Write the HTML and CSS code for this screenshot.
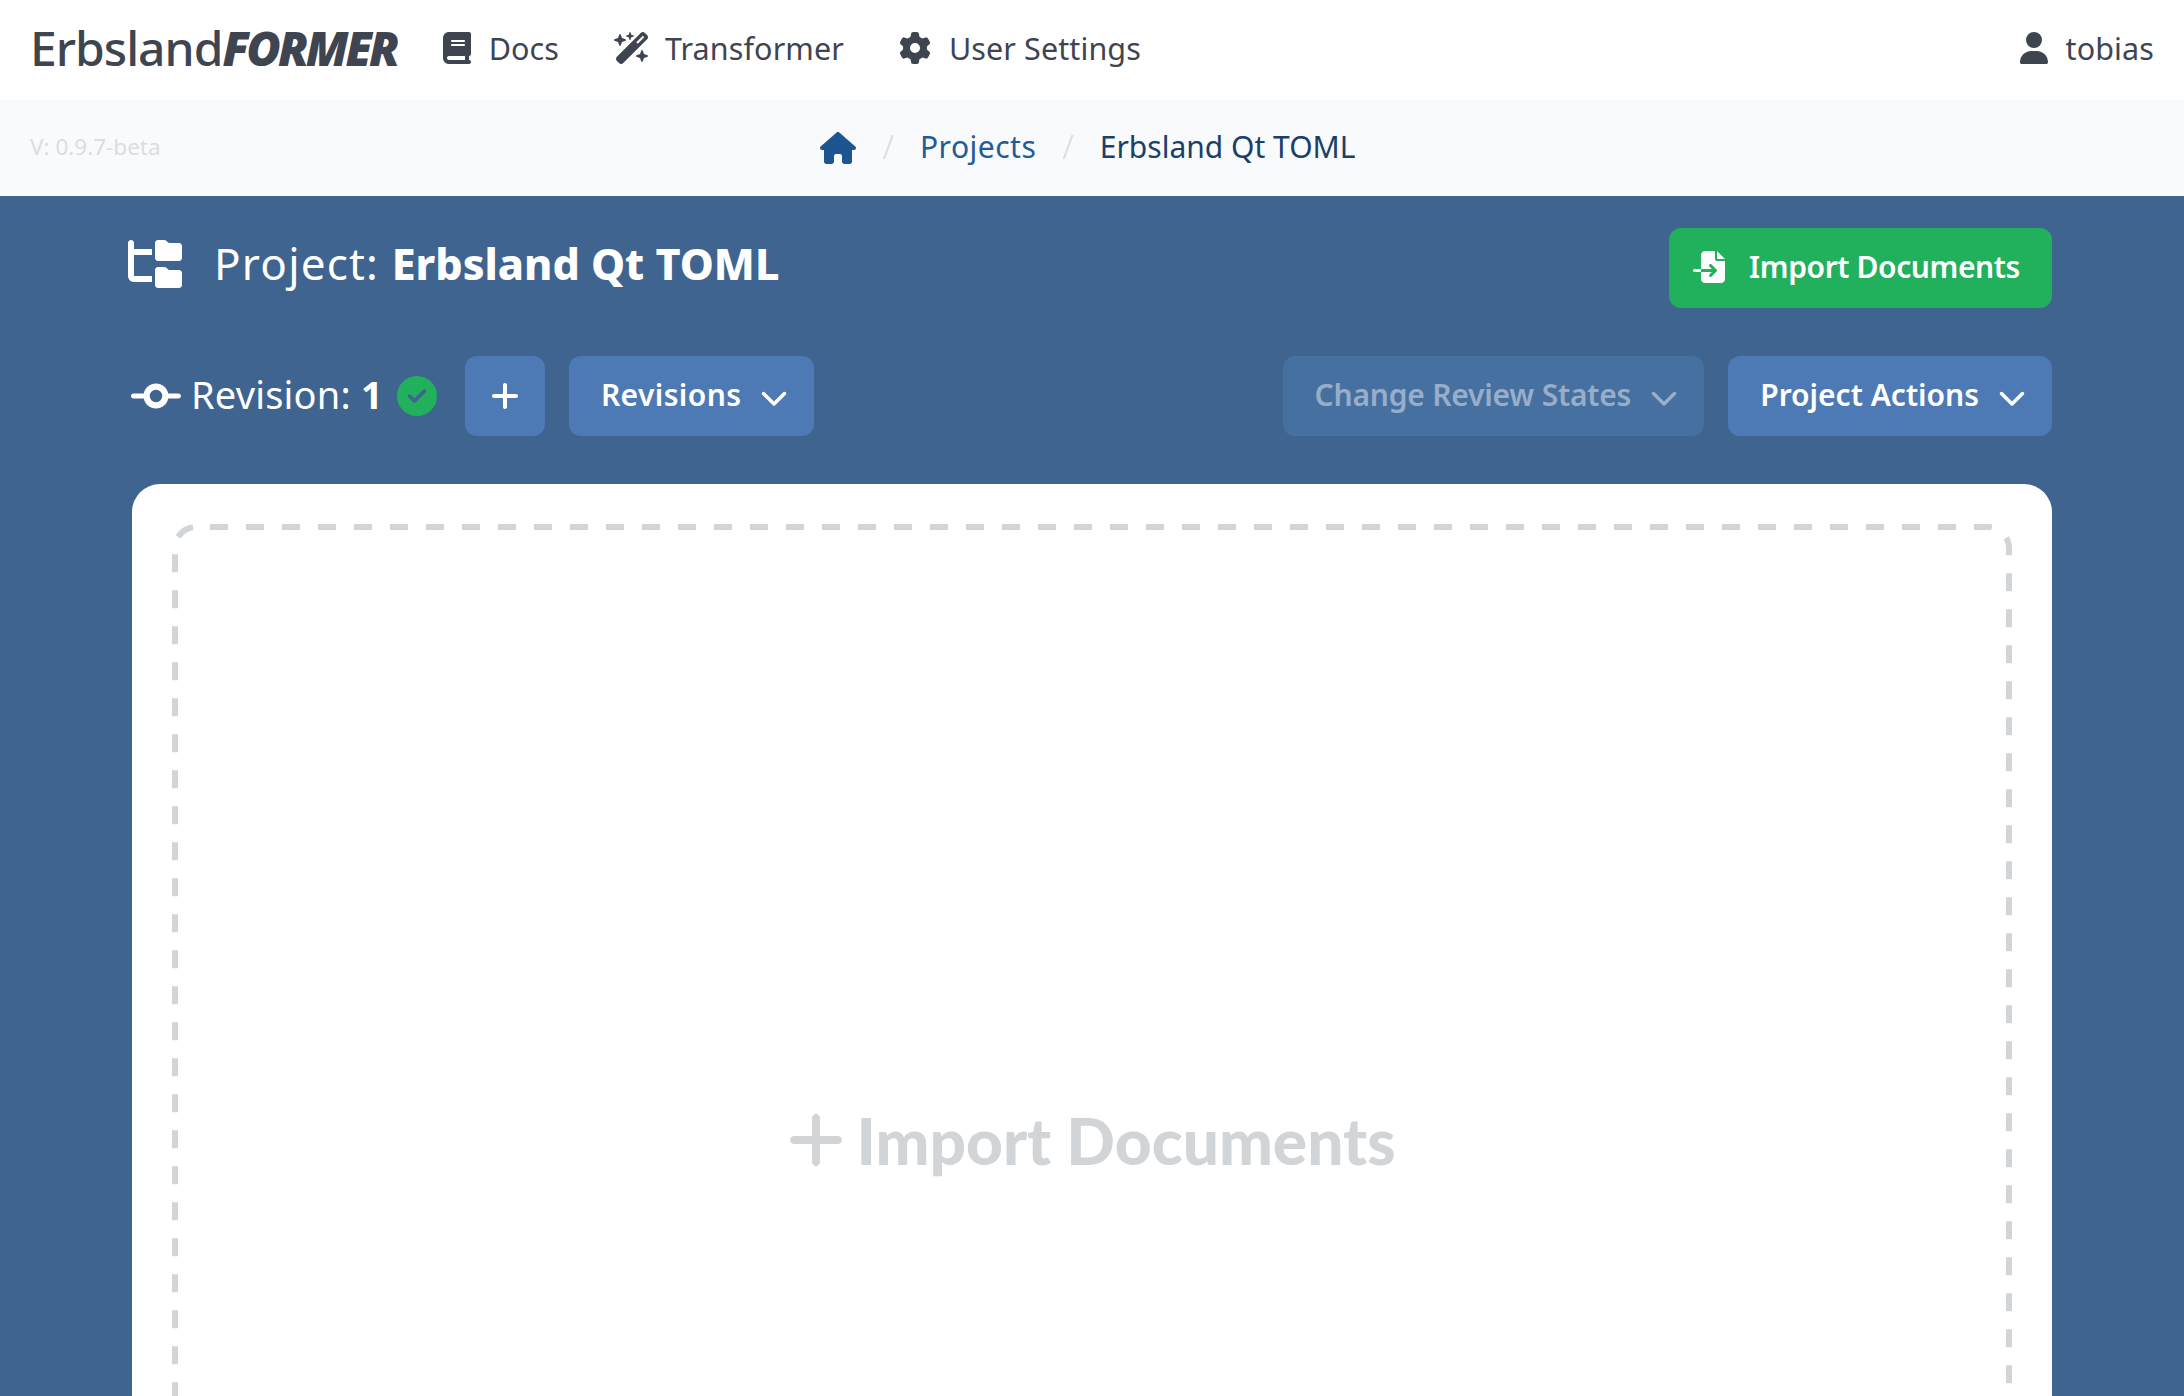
FILE: index.html
```html
<!DOCTYPE html>
<html lang="en">
<head>
<meta charset="utf-8">
<title>ErbslandFORMER</title>
<link rel="stylesheet" href="styles.css">
</head>
<body>
<nav class="nav">
  <div class="logo">Erbsland<b>FORMER</b></div>
  <a class="nav-item nav-docs"><svg class="nav-icon" viewBox="0 0 448 512"><path d="M96 0C43 0 0 43 0 96V416c0 53 43 96 96 96H384h32c17.7 0 32-14.3 32-32s-14.3-32-32-32V384c17.7 0 32-14.3 32-32V32c0-17.7-14.3-32-32-32H384 96zm0 384H352v64H96c-17.7 0-32-14.3-32-32s14.3-32 32-32zm32-240c0-8.8 7.2-16 16-16H336c8.8 0 16 7.2 16 16s-7.2 16-16 16H144c-8.8 0-16-7.2-16-16zm16 48H336c8.8 0 16 7.2 16 16s-7.2 16-16 16H144c-8.8 0-16-7.2-16-16s7.2-16 16-16z"/></svg>Docs</a>
  <a class="nav-item nav-wand"><svg class="nav-icon" viewBox="0 0 576 512"><path d="M234.7 42.7L197 56.8c-3 1.1-5 4-5 7.2s2 6.1 5 7.2l37.7 14.1L248.8 123c1.1 3 4 5 7.2 5s6.1-2 7.2-5l14.1-37.7L315 71.2c3-1.1 5-4 5-7.2s-2-6.1-5-7.2L277.3 42.7 263.2 5c-1.1-3-4-5-7.2-5s-6.1 2-7.2 5L234.7 42.7zM46.1 395.4c-18.7 18.7-18.7 49.1 0 67.9l34.6 34.6c18.7 18.7 49.1 18.7 67.9 0L529.9 116.5c18.7-18.7 18.7-49.1 0-67.9L495.3 14.1c-18.7-18.7-49.1-18.7-67.9 0L46.1 395.4zM484.6 82.6l-105 105-23.3-23.3 105-105 23.3 23.3zM7.5 117.2C3 118.9 0 123.2 0 128s3 9.1 7.5 10.8L64 160l21.2 56.5c1.7 4.5 6 7.5 10.8 7.5s9.1-3 10.8-7.5L128 160l56.5-21.2c4.5-1.7 7.5-6 7.5-10.8s-3-9.1-7.5-10.8L128 96 106.8 39.5C105.1 35 100.8 32 96 32s-9.1 3-10.8 7.5L64 96 7.5 117.2zm352 256c-4.5 1.7-7.5 6-7.5 10.8s3 9.1 7.5 10.8L416 416l21.2 56.5c1.7 4.5 6 7.5 10.8 7.5s9.1-3 10.8-7.5L480 416l56.5-21.2c4.5-1.7 7.5-6 7.5-10.8s-3-9.1-7.5-10.8L480 352l-21.2-56.5c-1.7-4.5-6-7.5-10.8-7.5s-9.1 3-10.8 7.5L416 352l-56.5 21.2z"/></svg>Transformer</a>
  <a class="nav-item"><svg class="nav-icon" viewBox="0 0 512 512"><path d="M495.9 166.6c3.2 8.7 .5 18.4-6.4 24.6l-43.3 39.4c1.1 8.3 1.7 16.8 1.7 25.4s-.6 17.1-1.7 25.4l43.3 39.4c6.9 6.2 9.6 15.9 6.4 24.6c-4.4 11.9-9.7 23.3-15.8 34.3l-4.7 8.1c-6.6 11-14 21.4-22.1 31.2c-5.9 7.2-15.7 9.6-24.5 6.8l-55.7-17.7c-13.4 10.3-28.2 18.9-44 25.4l-12.5 57.1c-2 9.1-9 16.3-18.2 17.8c-13.8 2.3-28 3.5-42.5 3.5s-28.7-1.2-42.5-3.5c-9.2-1.5-16.2-8.7-18.2-17.8l-12.5-57.1c-15.8-6.5-30.6-15.1-44-25.4L83.1 425.9c-8.8 2.8-18.6 .3-24.5-6.8c-8.1-9.8-15.5-20.2-22.1-31.2l-4.7-8.1c-6.1-11-11.4-22.4-15.8-34.3c-3.2-8.7-.5-18.4 6.4-24.6l43.3-39.4C64.6 273.1 64 264.6 64 256s.6-17.1 1.7-25.4L22.4 191.2c-6.9-6.2-9.6-15.9-6.4-24.6c4.4-11.9 9.7-23.3 15.8-34.3l4.7-8.1c6.6-11 14-21.4 22.1-31.2c5.9-7.2 15.7-9.6 24.5-6.8l55.7 17.7c13.4-10.3 28.2-18.9 44-25.4l12.5-57.1c2-9.1 9-16.3 18.2-17.8C227.3 1.2 241.5 0 256 0s28.7 1.2 42.5 3.5c9.2 1.5 16.2 8.7 18.2 17.8l12.5 57.1c15.8 6.5 30.6 15.1 44 25.4l55.7-17.7c8.8-2.8 18.6-.3 24.5 6.8c8.1 9.8 15.5 20.2 22.1 31.2l4.7 8.1c6.1 11 11.4 22.4 15.8 34.3zM256 336a80 80 0 1 0 0-160 80 80 0 1 0 0 160z"/></svg>User Settings</a>
  <a class="nav-item nav-user"><svg class="nav-icon" viewBox="0 0 448 512"><path d="M224 256A128 128 0 1 0 224 0a128 128 0 1 0 0 256zm-45.7 48C79.8 304 0 383.8 0 482.3C0 498.7 13.3 512 29.7 512H418.3c16.4 0 29.7-13.3 29.7-29.7C448 383.8 368.2 304 269.7 304H178.3z"/></svg>tobias</a>
</nav>
<div class="crumbs">
  <span class="version">V: 0.9.7-beta</span>
  <div class="trail">
    <svg class="home" viewBox="0 0 576 512"><path d="M575.8 255.5c0 18-15 32.1-32 32.1h-32l.7 160.2c0 2.7-.2 5.4-.5 8.1V472c0 22.1-17.9 40-40 40H456c-1.1 0-2.2 0-3.3-.1c-1.4 .1-2.8 .1-4.2 .1H416 392c-22.1 0-40-17.9-40-40V448 384c0-17.7-14.3-32-32-32H256c-17.7 0-32 14.3-32 32v64 24c0 22.1-17.9 40-40 40H160 128.1c-1.5 0-3-.1-4.5-.2c-1.2 .1-2.4 .2-3.6 .2H104c-22.1 0-40-17.9-40-40V360c0-.9 0-1.9 .1-2.8V287.6H32c-18 0-32-14-32-32.1c0-9 3-17 10-24L266.4 8c7-7 15-8 22-8s15 2 21 7L564.8 231.5c8 7 12 15 11 24z"/></svg>
    <span class="sep">/</span>
    <span class="crumb-link">Projects</span>
    <span class="sep">/</span>
    <span class="crumb-current">Erbsland Qt TOML</span>
  </div>
</div>
<main class="main">
  <header class="title-row">
    <h1 class="title"><svg class="title-icon" viewBox="0 0 576 512"><path d="M64 32C64 14.3 49.7 0 32 0S0 14.3 0 32v96V384c0 35.3 28.7 64 64 64H256V384H64V160H256V96H64V32zM288 192c0 17.7 14.3 32 32 32H544c17.7 0 32-14.3 32-32V64c0-17.7-14.3-32-32-32H445.3c-8.5 0-16.6-3.4-22.6-9.4L409.4 9.4c-6-6-14.1-9.4-22.6-9.4H320c-17.7 0-32 14.3-32 32V192zm0 288c0 17.7 14.3 32 32 32H544c17.7 0 32-14.3 32-32V352c0-17.7-14.3-32-32-32H445.3c-8.5 0-16.6-3.4-22.6-9.4l-13.3-13.3c-6-6-14.1-9.4-22.6-9.4H320c-17.7 0-32 14.3-32 32V480z"/></svg><span class="title-text">Project:&nbsp;<b>Erbsland Qt TOML</b></span></h1>
    <button class="btn btn-green"><svg class="btn-lead" viewBox="0 0 512 512"><path d="M128 64c0-35.3 28.7-64 64-64H352V128c0 17.7 14.3 32 32 32H512V448c0 35.3-28.7 64-64 64H192c-35.3 0-64-28.7-64-64V336H302.1l-39 39c-9.4 9.4-9.4 24.6 0 33.9s24.6 9.4 33.9 0l80-80c9.4-9.4 9.4-24.6 0-33.9l-80-80c-9.4-9.4-24.6-9.4-33.9 0s-9.4 24.6 0 33.9l39 39H128V64zm0 224v48H24c-13.3 0-24-10.7-24-24s10.7-24 24-24H128zM512 128H384V0L512 128z"/></svg>Import Documents</button>
  </header>
  <div class="rev-row">
    <svg class="rev-icon" viewBox="0 0 640 512"><path d="M320 336a80 80 0 1 0 0-160 80 80 0 1 0 0 160zm156.8-48C462 361 397.4 416 320 416s-142-55-156.8-128H32c-17.7 0-32-14.3-32-32s14.3-32 32-32H163.2C178 151 242.6 96 320 96s142 55 156.8 128H608c17.7 0 32 14.3 32 32s-14.3 32-32 32H476.8z"/></svg>
    <span class="rev-label">Revision: <b>1</b></span>
    <svg class="rev-check" viewBox="0 0 512 512"><path d="M256 512A256 256 0 1 0 256 0a256 256 0 1 0 0 512zM369 209L241 337c-9.4 9.4-24.6 9.4-33.9 0l-64-64c-9.4-9.4-9.4-24.6 0-33.9s24.6-9.4 33.9 0l47 47L335 175c9.4-9.4 24.6-9.4 33.9 0s9.4 24.6 0 33.9z"/></svg>
    <button class="btn btn-blue btn-plus"><svg class="plus-icon" viewBox="0 0 448 512"><path d="M256 80c0-17.7-14.3-32-32-32s-32 14.3-32 32V224H48c-17.7 0-32 14.3-32 32s14.3 32 32 32H192V432c0 17.7 14.3 32 32 32s32-14.3 32-32V288H400c17.7 0 32-14.3 32-32s-14.3-32-32-32H256V80z"/></svg></button>
    <button class="btn btn-blue btn-revisions">Revisions<svg class="chev" viewBox="0 0 512 512"><path d="M233.4 406.6c12.5 12.5 32.8 12.5 45.3 0l192-192c12.5-12.5 12.5-32.8 0-45.3s-32.8-12.5-45.3 0L256 338.7 86.6 169.4c-12.5-12.5-32.8-12.5-45.3 0s-12.5 32.8 0 45.3l192 192z"/></svg></button>
    <div class="spacer"></div>
    <button class="btn btn-blue btn-disabled">Change Review States<svg class="chev" viewBox="0 0 512 512"><path d="M233.4 406.6c12.5 12.5 32.8 12.5 45.3 0l192-192c12.5-12.5 12.5-32.8 0-45.3s-32.8-12.5-45.3 0L256 338.7 86.6 169.4c-12.5-12.5-32.8-12.5-45.3 0s-12.5 32.8 0 45.3l192 192z"/></svg></button>
    <button class="btn btn-blue">Project Actions<svg class="chev" viewBox="0 0 512 512"><path d="M233.4 406.6c12.5 12.5 32.8 12.5 45.3 0l192-192c12.5-12.5 12.5-32.8 0-45.3s-32.8-12.5-45.3 0L256 338.7 86.6 169.4c-12.5-12.5-32.8-12.5-45.3 0s-12.5 32.8 0 45.3l192 192z"/></svg></button>
  </div>
  <section class="card">
    <div class="drop">
      <svg class="drop-border" aria-hidden="true"><rect class="drop-rect" x="3" y="3" rx="21" ry="21"/></svg>
      <svg class="drop-plus" viewBox="0 0 448 512"><path d="M256 80c0-17.7-14.3-32-32-32s-32 14.3-32 32V224H48c-17.7 0-32 14.3-32 32s14.3 32 32 32H192V432c0 17.7 14.3 32 32 32s32-14.3 32-32V288H400c17.7 0 32-14.3 32-32s-14.3-32-32-32H256V80z"/></svg>
      <span class="drop-text">Import Documents</span>
    </div>
  </section>
</main>
</body>
</html>
```
FILE: styles.css
```css
* { box-sizing: border-box; }
html { margin: 0; height: 100%; overflow: hidden; }
body {
  margin: 0;
  height: 1396px;
  overflow: hidden;
  background: #3f6490;
  font-family: "Noto Sans", "Open Sans", sans-serif;
  color: #3f4451;
}
b { font-weight: 700; }

.nav {
  display: flex;
  align-items: center;
  height: 100px;
  padding: 0 30px 5px 30px;
  background: #fff;
  font-size: 30.5px;
  letter-spacing: 0.1px;
}
.logo {
  font-size: 48px;
  font-weight: 500;
  letter-spacing: -1px;
  margin-right: 46px;
  white-space: nowrap;
}
.logo b { font-size: 47px; font-style: italic; font-weight: 900; letter-spacing: -2.9px; }
.nav-item {
  display: flex;
  align-items: center;
  gap: 18px;
  margin-right: 55px;
  white-space: nowrap;
}
.nav-wand { gap: 15px; }
.nav-icon { height: 32px; width: auto; fill: #3f4451; display: block; }
.nav-user { margin-left: auto; margin-right: 0; }

.crumbs {
  position: relative;
  display: flex;
  align-items: center;
  justify-content: center;
  height: 96px;
  padding-bottom: 3px;
  background: #f9fafb;
  font-size: 30px;
}
.version {
  position: absolute;
  left: 30px;
  top: 48%;
  transform: translateY(-50%);
  font-size: 22.5px;
  color: #dadde1;
}
.trail { display: flex; align-items: center; margin-left: -8px; }
.home { height: 32px; width: auto; fill: #1c5592; display: block; margin-top: 3px; }
.sep { color: #d9dce0; margin: 0 26px; font-size: 33px; font-weight: 300; }
.crumb-link { color: #215b98; letter-spacing: 0.5px; }
.crumb-current { color: #1a3f69; }

.main { padding: 32px 132px 0; }
.title-row {
  display: flex;
  align-items: flex-start;
  justify-content: space-between;
  height: 80px;
}
.title {
  display: flex;
  align-items: center;
  margin: 0 0 0 -4px;
  height: 72px;
  font-size: 44px;
  font-weight: 400;
  color: #fff;
  white-space: nowrap;
}
.title-text { letter-spacing: 1.2px; position: relative; top: -1px; }
.title b { font-size: 43px; font-weight: 800; letter-spacing: 0; }
.title-icon { height: 48px; width: auto; fill: #fff; margin-right: 32px; display: block; }

.btn {
  display: inline-flex;
  align-items: center;
  height: 80px;
  padding: 0 26px 3px 32px;
  border: 0;
  border-radius: 12px;
  color: #fff;
  font-family: inherit;
  font-size: 30px;
  font-weight: 600;
  white-space: nowrap;
}
.btn-green { background: #21b05c; padding-left: 24px; padding-right: 32px; letter-spacing: -0.4px; }
.btn-lead { height: 32px; width: 32px; fill: #fff; margin-right: 24px; display: block; }
.btn-blue { background: #4d7ab4; }
.btn-plus { width: 80px; padding: 0; justify-content: center; margin-right: 24px; }
.plus-icon { height: 32px; width: auto; fill: #fff; display: block; }
.chev { height: 28px; width: 28px; fill: currentColor; margin-left: 19px; display: block; position: relative; top: 2px; letter-spacing: 0; }
.btn-revisions { letter-spacing: 0.4px; }
.btn-disabled { background: #46709f; color: #98aec8; margin-right: 24px; letter-spacing: -0.2px; }

.rev-row { display: flex; align-items: center; margin-top: 48px; height: 80px; }
.rev-icon { height: 40px; width: auto; fill: #fff; margin-right: 10px; display: block; margin-left: -1px; }
.rev-label { font-size: 38px; color: #fff; white-space: nowrap; letter-spacing: 0.2px; position: relative; top: -2px; }
.rev-check { height: 40px; width: 40px; fill: #21b05c; margin: 0 28px 0 14px; display: block; }
.spacer { flex: 1; }

.card {
  margin-top: 48px;
  padding: 40px;
  background: #fff;
  border-radius: 28px;
}
.drop {
  position: relative;
  display: flex;
  align-items: center;
  justify-content: center;
  gap: 12px;
  height: 1232px;
  color: #d1d5d8;
}
.drop-border { position: absolute; inset: 0; width: 100%; height: 100%; }
.drop-rect {
  width: calc(100% - 6px);
  height: calc(100% - 6px);
  fill: none;
  stroke: #d1d5d8;
  stroke-width: 6;
  stroke-dasharray: 18 18;
  stroke-dashoffset: -14;
}
.drop-plus { height: 64px; width: auto; fill: #d1d5d8; display: block; }
.drop-text { font-family: "Lato", "Noto Sans", sans-serif; font-size: 64px; font-weight: 900; }
```
